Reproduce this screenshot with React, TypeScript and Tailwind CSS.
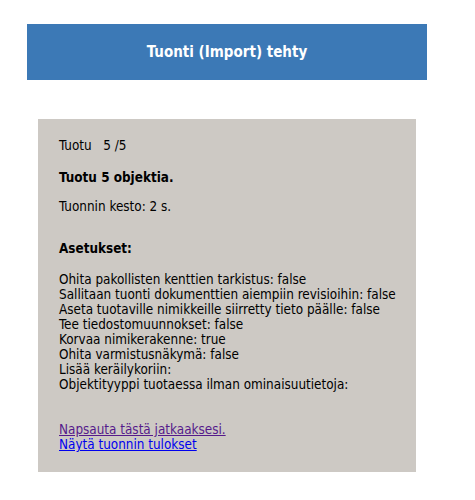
export default function App() {
  const settings = [
    "Ohita pakollisten kenttien tarkistus: false",
    "Sallitaan tuonti dokumenttien aiempiin revisioihin: false",
    "Aseta tuotaville nimikkeille siirretty tieto päälle: false",
    "Tee tiedostomuunnokset: false",
    "Korvaa nimikerakenne: true",
    "Ohita varmistusnäkymä: false",
    "Lisää keräilykoriin:",
    "Objektityyppi tuotaessa ilman ominaisuutietoja:",
  ];
  return (
    <div className="w-[475px] h-[500px] bg-white text-black" style={{ fontFamily: '"DejaVu Sans Condensed", "DejaVu Sans", sans-serif' }}>
      <div className="pt-[24px] pl-[27px]">
        <div className="w-[400px] h-[56px] bg-[#3c79b6] flex items-center justify-center text-white font-bold text-[15px]">
          Tuonti (Import) tehty
        </div>
      </div>
      <div className="pt-[39px] pl-[38px]">
        <div className="w-[378px] bg-[#cdc9c4] pl-[21px] pr-[10px] pt-[19px] pb-[20px] text-[13.4px] leading-[15px]">
          <div>Tuotu&nbsp;&nbsp;&nbsp;5 /5</div>
          <div className="mt-[17px] font-bold">Tuotu 5 objektia.</div>
          <div className="mt-[14px]">Tuonnin kesto: 2 s.</div>
          <div className="mt-[27px] font-bold">Asetukset:</div>
          <div className="mt-[16px]">
            {settings.map((s) => (
              <div key={s}>{s}</div>
            ))}
          </div>
          <div className="mt-[30px]">
            <div><a href="#" className="underline text-[#551a8b]">Napsauta tästä jatkaaksesi.</a></div>
            <div><a href="#" className="underline text-[#0000ee]">Näytä tuonnin tulokset</a></div>
          </div>
        </div>
      </div>
    </div>
  );
}
